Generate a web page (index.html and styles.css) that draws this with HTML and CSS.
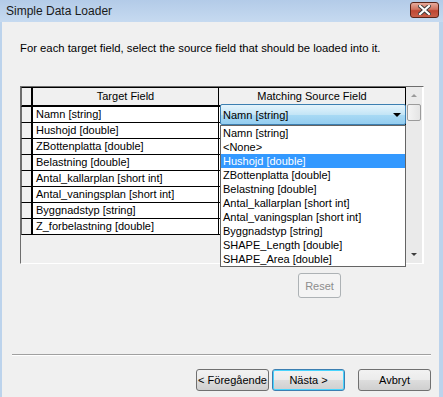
FILE: index.html
```html
<!DOCTYPE html>
<html lang="sv">

<head>
    <meta charset="UTF-8">
    <title>Simple Data Loader</title>
    <link rel="stylesheet" href="styles.css">
</head>

<body>
    <div class="window">
        <div class="titlebar">
            <span class="title">Simple Data Loader</span>
            <div class="close">
                <svg width="13" height="10" viewBox="0 0 13 10">
                    <path d="M2 1 L11 9 M11 1 L2 9" stroke="#3a3a3a" stroke-width="4" stroke-linecap="square"/>
                    <path d="M2 1 L11 9 M11 1 L2 9" stroke="#ffffff" stroke-width="2.2" stroke-linecap="square"/>
                </svg>
            </div>
        </div>

        <div class="client">
            <p class="intro">For each target field, select the source field that should be loaded into it.</p>

            <div class="grid">
                <div class="table">
                    <div class="row head">
                        <div class="rh"></div>
                        <div class="cell">Target Field</div>
                        <div class="cell">Matching Source Field</div>
                    </div>
                    <div class="row"><div class="rh"></div><div class="cell">Namn [string]</div><div class="cell"></div></div>
                    <div class="row"><div class="rh"></div><div class="cell">Hushojd [double]</div><div class="cell"></div></div>
                    <div class="row"><div class="rh"></div><div class="cell">ZBottenplatta [double]</div><div class="cell"></div></div>
                    <div class="row"><div class="rh"></div><div class="cell">Belastning [double]</div><div class="cell"></div></div>
                    <div class="row"><div class="rh"></div><div class="cell">Antal_kallarplan [short int]</div><div class="cell"></div></div>
                    <div class="row"><div class="rh"></div><div class="cell">Antal_vaningsplan [short int]</div><div class="cell"></div></div>
                    <div class="row"><div class="rh"></div><div class="cell">Byggnadstyp [string]</div><div class="cell"></div></div>
                    <div class="row"><div class="rh"></div><div class="cell">Z_forbelastning [double]</div><div class="cell"></div></div>
                </div>

                <div class="scrollbar">
                    <div class="arrow up"></div>
                    <div class="thumb"></div>
                    <div class="track"></div>
                    <div class="arrow down"></div>
                </div>

                <!-- open combo box over the first source cell -->
                <div class="combo">
                    <span>Namn [string]</span>
                    <span class="caret"></span>
                </div>
                <ul class="droplist">
                    <li>Namn [string]</li>
                    <li>&lt;None&gt;</li>
                    <li class="selected">Hushojd [double]</li>
                    <li>ZBottenplatta [double]</li>
                    <li>Belastning [double]</li>
                    <li>Antal_kallarplan [short int]</li>
                    <li>Antal_vaningsplan [short int]</li>
                    <li>Byggnadstyp [string]</li>
                    <li>SHAPE_Length [double]</li>
                    <li>SHAPE_Area [double]</li>
                </ul>
            </div>

            <button class="btn reset" disabled>Reset</button>

            <div class="separator"></div>

            <div class="buttons">
                <button class="btn">&lt; Föregående</button>
                <button class="btn default">Nästa &gt;</button>
                <button class="btn cancel">Avbryt</button>
            </div>
        </div>
    </div>
</body>

</html>
```

FILE: styles.css
```css
body {
    margin: 0;
    padding: 0;
    font-family: "Liberation Sans", Arial, sans-serif;
    font-size: 11px;
    color: #000000;
    background-color: #bcd3ec;
}

.window {
    width: 443px;
    height: 397px;
    overflow: hidden;
    background-color: #bcd3ec;
}

.titlebar {
    height: 22px;
    display: flex;
    justify-content: space-between;
    align-items: flex-start;
    background: linear-gradient(#b3cbe8, #c6daf0);
}

.title {
    font-size: 12px;
    line-height: 22px;
    padding-left: 6px;
    color: #1a1a1a;
}

.close {
    width: 29px;
    height: 16px;
    margin-top: 2px;
    margin-right: 4px;
    box-sizing: border-box;
    border: 1px solid #5a2418;
    border-radius: 3px;
    background: linear-gradient(#e6ab9c, #d0735f 45%, #bf4733 55%, #c8604a);
    display: flex;
    justify-content: center;
    align-items: center;
}

.client {
    height: 375px;
    margin: 0 4px 0 2px;
    background-color: #f0f0f0;
    display: flex;
    flex-direction: column;
}

.intro {
    margin: 19px 0 0 18px;
    font-size: 11.3px;
    line-height: 14px;
}

.grid {
    position: relative;
    margin: 31px 0 0 18px;
    width: 404px;
    height: 178px;
    box-sizing: border-box;
    border: 1px solid;
    border-color: #6d6d6d #ffffff #ffffff #6d6d6d;
    display: flex;
}

.table {
    width: 385px;
}

.row {
    display: grid;
    grid-template-columns: 12px 186px 187px;
    height: 16px;
}

.row.head {
    height: 20px;
}

.rh {
    box-sizing: border-box;
    background-color: #f0f0f0;
    border-left: 1px solid #6d6d6d;
    border-right: 2px solid #000000;
    border-bottom: 1px solid #000000;
}

.cell {
    box-sizing: border-box;
    background-color: #ffffff;
    border-right: 1px solid #000000;
    border-bottom: 1px solid #000000;
    padding-left: 3px;
    line-height: 15px;
    white-space: nowrap;
    overflow: hidden;
}

.head .cell,
.head .rh {
    background-color: #f0f0f0;
    border-top: 1px solid #000000;
    border-bottom-width: 2px;
    text-align: center;
    line-height: 17px;
    padding-left: 0;
}

.scrollbar {
    width: 17px;
    display: flex;
    flex-direction: column;
    background-color: #eaeaea;
    border-right: 1px solid #ffffff;
}

.arrow {
    height: 17px;
    display: flex;
    justify-content: center;
    align-items: center;
}

.arrow::before {
    content: "";
    border-left: 3px solid transparent;
    border-right: 3px solid transparent;
}

.arrow.up::before {
    border-bottom: 3px solid #9a9a9a;
}

.arrow.down::before {
    border-top: 3px solid #3c3c3c;
}

.thumb {
    height: 15px;
    margin: 0 1px 0 1px;
    border: 1px solid #9b9b9b;
    border-radius: 2px;
    background: linear-gradient(90deg, #f4f4f4, #e4e4e4);
}

.track {
    flex: 1;
}

.combo {
    position: absolute;
    left: 199px;
    top: 17px;
    width: 186px;
    height: 21px;
    box-sizing: border-box;
    border: 1px solid #3c7fb1;
    border-radius: 2px;
    background: linear-gradient(#e5f4fc, #c4e5f6 50%, #a9daf4 51%, #94cdf0);
    display: flex;
    justify-content: space-between;
    align-items: center;
    padding: 0 4px 0 2px;
}

.caret {
    border-left: 4px solid transparent;
    border-right: 4px solid transparent;
    border-top: 4px solid #000000;
}

.droplist {
    position: absolute;
    left: 199px;
    top: 38px;
    width: 186px;
    margin: 0;
    padding: 0;
    list-style: none;
    box-sizing: border-box;
    border: 1px solid #646464;
    background-color: #ffffff;
}

.droplist li {
    height: 14px;
    line-height: 14px;
    padding-left: 2px;
    white-space: nowrap;
}

.droplist li.selected {
    background-color: #3399ff;
    color: #ffffff;
}

.btn {
    font-family: "Liberation Sans", Arial, sans-serif;
    font-size: 11px;
    color: #000000;
    height: 22px;
    width: 73px;
    padding: 0;
    box-sizing: border-box;
    border: 1px solid #707070;
    border-radius: 3px;
    background: linear-gradient(#f2f2f2, #ebebeb 50%, #dddddd 51%, #cfcfcf);
}

.btn.reset {
    margin: 9px 0 0 296px;
    width: 43px;
    height: 25px;
    color: #8d8d8d;
    border-color: #adb2b5;
    background: #f4f4f4;
}

.separator {
    margin: 56px 8px 0 10px;
    border-top: 1px solid #a0a0a0;
    border-bottom: 1px solid #ffffff;
}

.buttons {
    display: flex;
    justify-content: flex-end;
    margin: 13px 8px 0 0;
    gap: 3px;
}

.btn.default {
    border-color: #3c7fb1;
    box-shadow: inset 0 0 0 1px #48d4fd;
}

.btn.cancel {
    margin-left: 10px;
}
```
